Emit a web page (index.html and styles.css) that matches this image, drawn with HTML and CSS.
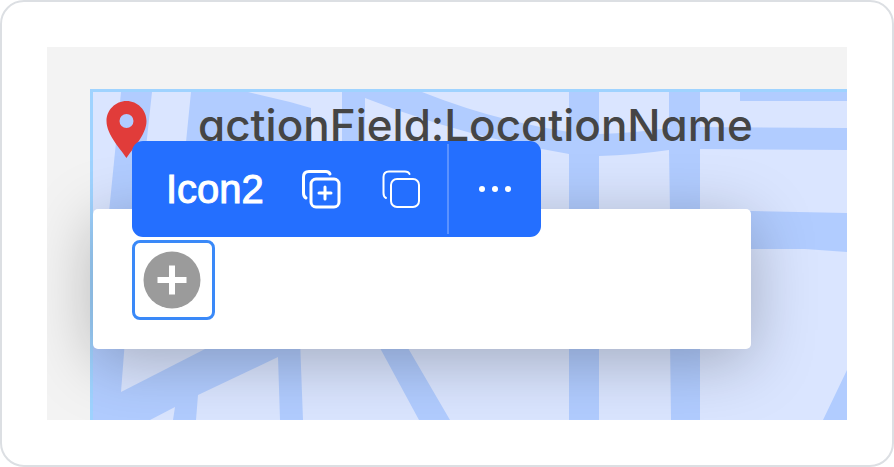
FILE: index.html
```html
<!DOCTYPE html>
<html lang="en">
<head>
<meta charset="utf-8">
<meta name="viewport" content="width=device-width, initial-scale=1">
<title>Icon2</title>
<link rel="stylesheet" href="styles.css">
</head>
<body>
<main class="frame">
  <div class="canvas">
    <section class="map">
      <svg class="map-art" viewBox="93 92 754 328" preserveAspectRatio="xMinYMin slice" aria-hidden="true">
        <path d="M93 92H121L109 212H93ZM152 92H191L179 212H139ZM248 92H342V212H311V108L290 102ZM365 98Q460 136 569 154V212H365ZM422 92H569V132Q495 121 422 92ZM599 92H669V128Q635 133 599 134ZM599 156Q635 155 669 150L670 212H599ZM700 92H740V101H847V128L700 127ZM700 149L847 150V213L752 211H700ZM700 249H805L847 252V370L823 420H700ZM125 340H223L207 348L121 392ZM198 395L278 357L280 420H196ZM150 420L175 407L173 420ZM300 340H376L380 348L419 420H303ZM404 340H569V420H450L408 348ZM599 340H670L671 420H599Z"/>
      </svg>
      <header class="map-header">
        <svg class="pin" viewBox="0 0 40 57" aria-hidden="true">
          <path fill-rule="evenodd" d="M20 0C9 0 0 9 0 20C0 34 15 49 20 57C25 49 40 34 40 20C40 9 31 0 20 0ZM20 13A7 7 0 1 1 20 27A7 7 0 1 1 20 13Z"/>
        </svg>
        <h1 class="title">actionField:LocationName</h1>
      </header>
      <div class="card">
        <button class="icon-slot" type="button" aria-label="Add icon">
          <svg viewBox="0 0 58 58" aria-hidden="true">
            <circle class="slot-disc" cx="29" cy="29" r="28.5"/>
            <path class="slot-plus" d="M29 14.5V43.5M14.5 29H43.5"/>
          </svg>
        </button>
        <div class="toolbar" role="toolbar" aria-label="Icon2">
          <span class="toolbar-name">Icon2</span>
          <button class="tool" type="button" aria-label="Duplicate">
            <svg class="copy bold" viewBox="0 0 40 40" aria-hidden="true">
              <path d="M29 5C28 3 27 2.500 25 2.500H8Q2.500 2.500 2.500 8V24Q2.500 28 5 29"/>
              <rect x="10" y="10" width="28" height="28" rx="5"/>
              <path d="M24 18V30M18 24H30"/>
            </svg>
          </button>
          <button class="tool" type="button" aria-label="Copy">
            <svg class="copy" viewBox="0 0 40 40" aria-hidden="true">
              <path d="M28.500 5C27.500 2.500 26 2.500 24 2.500H8Q2.500 2.500 2.500 8V24Q2.500 28 5 29"/>
              <rect x="10" y="10" width="28" height="28" rx="6"/>
            </svg>
          </button>
          <button class="more" type="button" aria-label="More">
            <svg class="dots" viewBox="0 0 34 8" aria-hidden="true">
              <circle cx="4" cy="4" r="3"/><circle cx="17" cy="4" r="3"/><circle cx="30" cy="4" r="3"/>
            </svg>
          </button>
        </div>
      </div>
    </section>
  </div>
</main>
</body>
</html>
```
FILE: styles.css
```css
* { box-sizing: border-box; }

body {
  margin: 0;
  background: #fff;
  font-family: Inter, "Open Sans", sans-serif;
}

button {
  margin: 0;
  padding: 0;
  border: 0;
  background: none;
  color: inherit;
  cursor: pointer;
}

svg { display: block; }

.frame {
  display: flex;
  min-height: 100vh;
  padding: 45px;
  border: 2px solid #dcdfe3;
  border-radius: 24px;
}

.canvas {
  display: flex;
  flex: 1;
  padding: 42px 0 0 43px;
  background: #f3f3f3;
  overflow: hidden;
}

.map {
  position: relative;
  flex: 1;
  padding-bottom: 71px;
  border: solid #9fd3ff;
  border-width: 3px 0 0 3px;
  background: #b1ccff;
}

.map-art {
  position: absolute;
  inset: 0;
  width: 100%;
  height: 100%;
  fill: #dae5ff;
}

.map-header {
  position: relative;
  display: flex;
  align-items: flex-start;
  gap: 51px;
  height: 117px;
  padding: 9px 0 0 13px;
}

.pin {
  flex: none;
  width: 41px;
  height: 57px;
  fill: #e13c3a;
}

.title {
  margin: 0;
  color: #454545;
  font-size: 44px;
  font-weight: 500;
  line-height: 48px;
  white-space: nowrap;
  font-feature-settings: "cv11";
}

.card {
  position: relative;
  margin-right: 96px;
  padding: 31px 39px 29px;
  border-radius: 5px;
  background: #fff;
  box-shadow: 0 12px 64px rgba(0, 0, 0, 0.26);
}

.icon-slot {
  display: flex;
  align-items: center;
  justify-content: center;
  width: 83px;
  height: 80px;
  padding-right: 3px;
  border: 3px solid #3a89f8;
  border-radius: 8px;
}

.icon-slot svg {
  width: 58px;
  height: 58px;
}

.slot-disc { fill: #9b9b9b; }

.slot-plus {
  stroke: #fff;
  stroke-width: 6;
}

.toolbar {
  position: absolute;
  left: 39px;
  bottom: 112px;
  display: flex;
  align-items: center;
  height: 96px;
  padding-left: 34px;
  border-radius: 11px;
  background: #246fff;
  color: #fff;
}

.toolbar-name {
  margin-right: 37px;
  font-family: "Liberation Sans", sans-serif;
  font-size: 40px;
  line-height: 48px;
  -webkit-text-stroke: 1px #fff;
}

.tool { margin-right: 40px; }
.tool + .tool { margin-right: 26px; }

.copy {
  width: 40px;
  height: 40px;
  fill: none;
  stroke: #fff;
  stroke-width: 2;
  stroke-linecap: round;
}

.copy.bold { stroke-width: 3; }

.more {
  display: flex;
  align-items: center;
  justify-content: center;
  width: 94px;
  height: 90px;
  border-left: 2px solid #5b92ff;
}

.dots {
  width: 34px;
  height: 8px;
  fill: #fff;
}
```
